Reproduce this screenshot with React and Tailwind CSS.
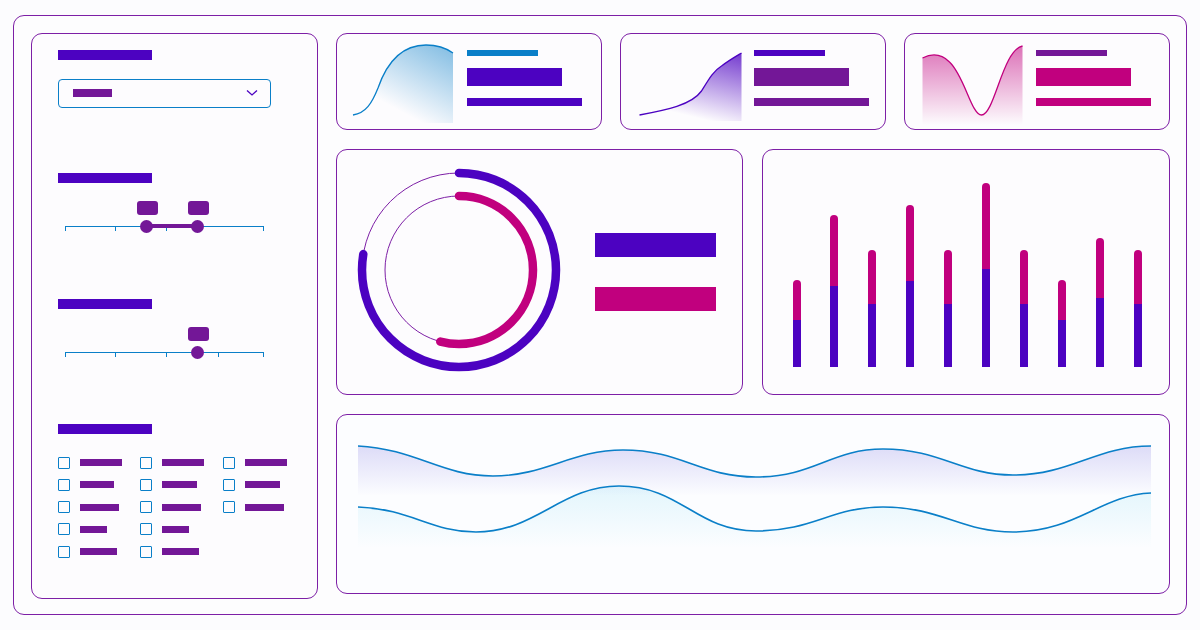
const indigo = "bg-[#4c02c1]";

function Slider({ ticks, knobs, range }) {
  return (
    <div className="relative w-[210px] h-[30px]">
      {knobs.map((k) => (
        <div
          key={"l" + k}
          className="absolute top-0 w-[21px] h-[14px] rounded-[3px] bg-[#731797]"
          style={{ left: k - 10 }}
        />
      ))}
      <div className="absolute left-[7px] top-[25px] w-[199px] h-px bg-[#0a7fc8]" />
      {ticks.map((t) => (
        <div
          key={"t" + t}
          className="absolute top-[25px] w-px h-[5px] bg-[#0a7fc8]"
          style={{ left: t }}
        />
      ))}
      {range && (
        <div
          className="absolute top-[23.5px] h-[4px] bg-[#731797]"
          style={{ left: range[0], width: range[1] - range[0] }}
        />
      )}
      {knobs.map((k) => (
        <div
          key={"k" + k}
          className="absolute top-[19px] w-[13px] h-[13px] rounded-full bg-[#731797]"
          style={{ left: k - 6.5 }}
        />
      ))}
    </div>
  );
}

function Check({ w }) {
  return (
    <div className="flex items-center gap-[10px] h-[12px]">
      <div className="w-[12px] h-[12px] border-[1.5px] border-[#0a7fc8] rounded-[1px]" />
      <div className="h-[7px] bg-[#731797]" style={{ width: w }} />
    </div>
  );
}

function Sidebar() {
  const cols = [
    [42, 34, 39, 27, 37],
    [42, 35, 39, 27, 37],
    [42, 35, 39],
  ];
  return (
    <div className="w-[287px] h-full shrink-0 rounded-[11px] border-[1.5px] border-[#7d1fa6] bg-[#fdfcfe] pl-[26px] pt-[16px] flex flex-col">
      <div className={`w-[94px] h-[10px] ${indigo}`} />
      <div className="mt-[19px] w-[213px] h-[29px] rounded-[4px] border-[1.5px] border-[#0a7fc8] flex items-center justify-between pl-[14px] pr-[12px]">
        <div className="w-[39px] h-[8px] bg-[#731797]" />
        <svg width="12" height="8" viewBox="0 0 12 8">
          <path d="M1 1.5 L6 6 L11 1.5" fill="none" stroke="#4c02c1" strokeWidth="1.3" />
        </svg>
      </div>
      <div className={`mt-[65px] w-[94px] h-[10px] ${indigo}`} />
      <div className="mt-[18px]">
        <Slider ticks={[7, 57, 108, 205]} knobs={[89, 140]} range={[89, 140]} />
      </div>
      <div className={`mt-[68px] w-[94px] h-[10px] ${indigo}`} />
      <div className="mt-[18px]">
        <Slider ticks={[7, 57, 108, 160, 205]} knobs={[140]} />
      </div>
      <div className={`mt-[67px] w-[94px] h-[10px] ${indigo}`} />
      <div className="mt-[23px] flex">
        {cols.map((c, i) => (
          <div key={i} className="w-[82.5px] flex flex-col gap-[10.25px]">
            {c.map((w, j) => (
              <Check key={j} w={w} />
            ))}
          </div>
        ))}
      </div>
    </div>
  );
}

function MiniCard({ id, curve, fill, stroke, grad, op, bars, barsLeft }) {
  return (
    <div className="h-full rounded-[11px] border-[1.5px] border-[#7d1fa6] bg-[#fdfcfe] flex items-start overflow-hidden">
      <svg width={barsLeft} height="95" viewBox="1 1 130 95" className="shrink-0">
        <defs>
          <linearGradient id={id} x1={grad[0]} y1={grad[1]} x2={grad[2]} y2={grad[3]}>
            <stop offset="0" stopColor={stroke} stopOpacity={op} />
            <stop offset="1" stopColor={stroke} stopOpacity="0" />
          </linearGradient>
        </defs>
        <path d={fill} fill={`url(#${id})`} />
        <path d={curve} fill="none" stroke={stroke} strokeWidth="1.3" />
      </svg>
      <div className="flex flex-col pt-[16.5px]">
        <div className="h-[6px]" style={{ width: 71, background: bars[0] }} />
        <div className="mt-[12px] h-[18px]" style={{ width: 95, background: bars[1] }} />
        <div className="mt-[12px] h-[8px]" style={{ width: 115, background: bars[2] }} />
      </div>
    </div>
  );
}

function Donut() {
  const r1 = 97;
  const r2 = 74;
  const c1 = 2 * Math.PI * r1;
  const c2 = 2 * Math.PI * r2;
  return (
    <div className="h-full rounded-[11px] border-[1.5px] border-[#7d1fa6] bg-[#fdfcfe] flex items-center">
      <svg width="246" height="243" viewBox="1 1 246 243" className="shrink-0">
        <circle cx="123" cy="121" r={r1} fill="none" stroke="#7d1fa6" strokeWidth="1" />
        <circle cx="123" cy="121" r={r2} fill="none" stroke="#7d1fa6" strokeWidth="1" />
        <circle
          cx="123" cy="121" r={r1} fill="none" stroke="#4c02c1" strokeWidth="8.5" strokeLinecap="round"
          strokeDasharray={`${c1 * 0.775} ${c1}`} transform="rotate(-90 123 121)"
        />
        <circle
          cx="123" cy="121" r={r2} fill="none" stroke="#c1007e" strokeWidth="8.5" strokeLinecap="round"
          strokeDasharray={`${c2 * 0.54} ${c2}`} transform="rotate(-90 123 121)"
        />
      </svg>
      <div className="ml-[12px] flex flex-col gap-[30px]">
        <div className={`w-[121px] h-[24px] ${indigo}`} />
        <div className="w-[121px] h-[24px] bg-[#c1007e]" />
      </div>
    </div>
  );
}

function Bars() {
  const data = [
    [87, 47], [152, 81], [117, 63], [162, 86], [117, 63],
    [184, 98], [117, 63], [87, 47], [129, 69], [117, 63],
  ];
  return (
    <div className="h-full rounded-[11px] border-[1.5px] border-[#7d1fa6] bg-[#fdfcfe] flex items-end justify-between pl-[29.5px] pr-[26.5px] pb-[26.5px]">
      {data.map(([h, low], i) => (
        <div key={i} className="w-[8px] flex flex-col" style={{ height: h }}>
          <div className="flex-1 rounded-t-full bg-[#c1007e]" />
          <div className={indigo} style={{ height: low }} />
        </div>
      ))}
    </div>
  );
}

function Waves() {
  const w1 =
    "M22 32 C 80 35, 105 62, 157 62 C 210 62, 235 36, 287 36 C 345 36, 365 63, 420 63 C 478 63, 495 35, 547 35 C 605 35, 625 61, 677 61 C 735 61, 760 32, 815 32";
  const w2 =
    "M22 93 C 75 95, 95 118, 140 118 C 200 118, 225 72, 283 72 C 345 72, 360 117, 420 117 C 478 117, 495 93, 547 93 C 605 93, 625 118, 677 118 C 740 118, 765 81, 815 79";
  return (
    <div className="h-full rounded-[11px] border-[1.5px] border-[#7d1fa6] bg-[#fcfdff] overflow-hidden">
      <svg className="block" width="831" height="177" viewBox="1 1 831 177">
        <defs>
          <linearGradient id="wf1" x1="0" y1="30" x2="0" y2="82" gradientUnits="userSpaceOnUse">
            <stop offset="0" stopColor="#5a4fd8" stopOpacity="0.2" />
            <stop offset="1" stopColor="#5a4fd8" stopOpacity="0" />
          </linearGradient>
          <linearGradient id="wf2" x1="0" y1="72" x2="0" y2="134" gradientUnits="userSpaceOnUse">
            <stop offset="0" stopColor="#28c0e8" stopOpacity="0.12" />
            <stop offset="1" stopColor="#28c0e8" stopOpacity="0" />
          </linearGradient>
        </defs>
        <path d={`${w1} L815 84 L22 84 Z`} fill="url(#wf1)" />
        <path d={`${w2} L815 134 L22 134 Z`} fill="url(#wf2)" />
        <path d={w1} fill="none" stroke="#0a7fc8" strokeWidth="1.6" />
        <path d={w2} fill="none" stroke="#0a7fc8" strokeWidth="1.6" />
      </svg>
    </div>
  );
}

export default function App() {
  return (
    <div className="w-[1200px] h-[630px] bg-[#fcfcfe] pl-[13px] pt-[15px] font-['Liberation_Sans',sans-serif]">
      <div className="w-[1174px] h-[600px] rounded-[11px] border-[1.5px] border-[#7d1fa6] bg-[#fdfdfe] px-[16.5px] pt-[16.5px] pb-[15.5px] flex gap-[18px]">
        <Sidebar />
        <div className="flex-1 flex flex-col">
          <div className="h-[97px] grid grid-cols-3 gap-[18px]">
            <MiniCard
              id="g1"
              barsLeft={130}
              stroke="#0a7fc8"
              op="0.5"
              grad={[0.95, 0, 0.4, 0.8]}
              curve="M17 82 C 30 80, 36 70, 42 55 C 50 32, 64 12, 90 12 C 102 12, 110 15, 117 20"
              fill="M17 82 C 30 80, 36 70, 42 55 C 50 32, 64 12, 90 12 C 102 12, 110 15, 117 20 L117 90 L17 90 Z"
              bars={["#0a7fc8", "#4c02c1", "#4c02c1"]}
            />
            <MiniCard
              id="g2"
              barsLeft={133}
              stroke="#4c02c1"
              op="0.75"
              grad={[0.9, 0, 0.55, 0.95]}
              curve="M18 82 C 45 77, 70 72, 80 58 C 88 45, 92 38, 100 33 C 108 27, 115 23, 120 20"
              fill="M18 82 C 45 77, 70 72, 80 58 C 88 45, 92 38, 100 33 C 108 27, 115 23, 120 20 L120 88 L18 88 Z"
              bars={["#4c02c1", "#731797", "#731797"]}
            />
            <MiniCard
              id="g3"
              barsLeft={131}
              stroke="#c1007e"
              op="0.55"
              grad={[0, 0, 0, 1]}
              curve="M18 25 C 26 21, 36 20, 45 29 C 60 43, 67 82, 77 82 C 90 82, 98 17, 118 13"
              fill="M18 25 C 26 21, 36 20, 45 29 C 60 43, 67 82, 77 82 C 90 82, 98 17, 118 13 L118 92 L18 92 Z"
              bars={["#731797", "#c1007e", "#c1007e"]}
            />
          </div>
          <div className="mt-[19px] h-[246px] grid grid-cols-2 gap-[19px]">
            <Donut />
            <Bars />
          </div>
          <div className="mt-[19px] h-[180px]">
            <Waves />
          </div>
        </div>
      </div>
    </div>
  );
}
